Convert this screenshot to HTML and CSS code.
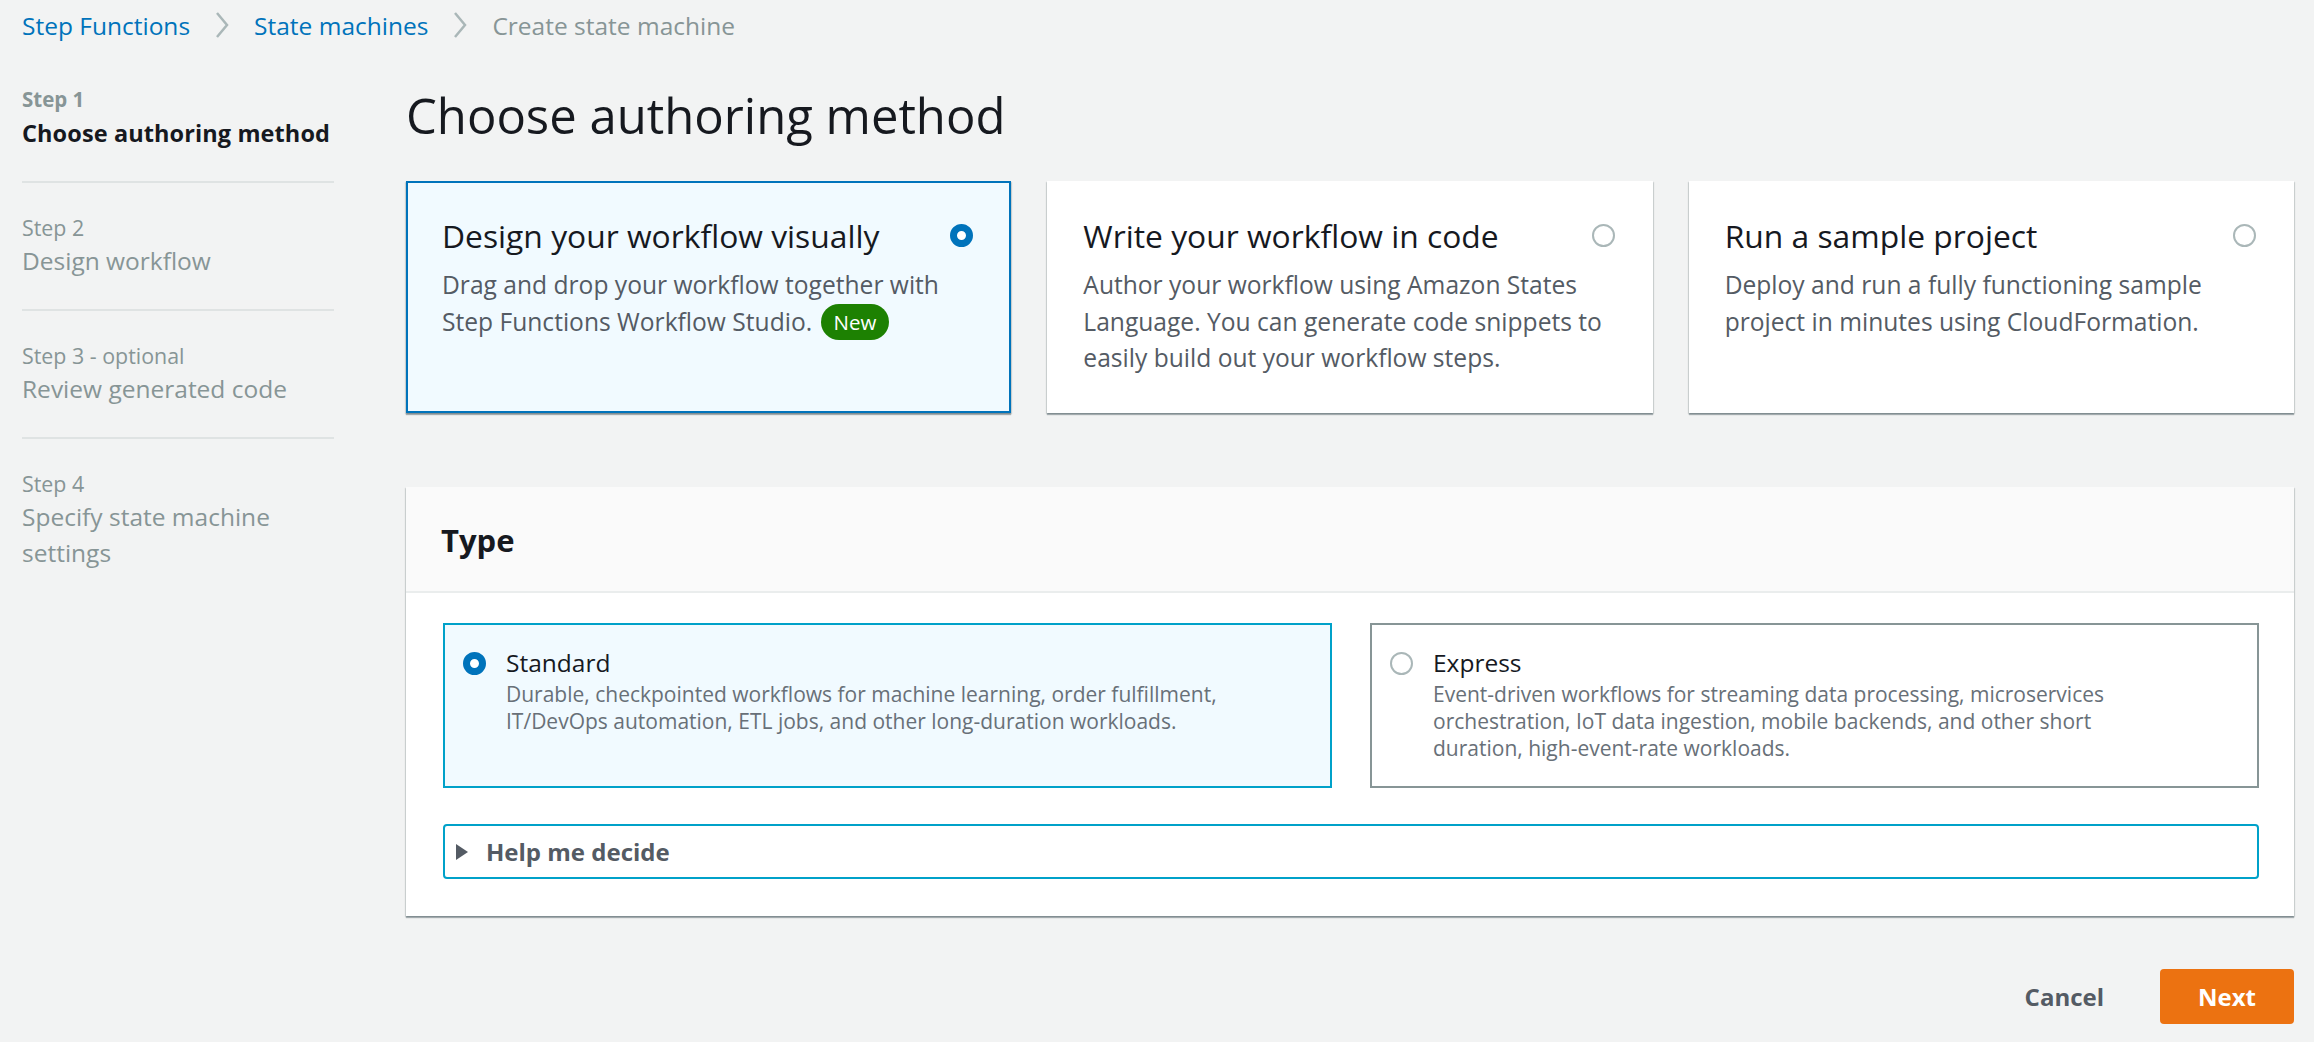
FILE: index.html
```html
<!DOCTYPE html>
<html lang="en">
<head>
<meta charset="utf-8">
<title>Create state machine</title>
<link rel="stylesheet" href="styles.css">
</head>
<body>
<div class="page">
  <nav class="breadcrumbs">
    <a class="crumb-link" href="#">Step Functions</a>
    <svg class="chevron" width="16" height="28" viewBox="0 0 16 28"><path d="M3 2 L13 14 L3 26" fill="none" stroke="#aab7b8" stroke-width="2.5"/></svg>
    <a class="crumb-link" href="#">State machines</a>
    <svg class="chevron" width="16" height="28" viewBox="0 0 16 28"><path d="M3 2 L13 14 L3 26" fill="none" stroke="#aab7b8" stroke-width="2.5"/></svg>
    <span class="crumb-current">Create state machine</span>
  </nav>

  <div class="layout">
    <aside class="steps">
      <ol class="step-list">
        <li class="step active">
          <div class="step-label">Step 1</div>
          <div class="step-title">Choose authoring method</div>
        </li>
        <li class="step">
          <div class="step-label">Step 2</div>
          <div class="step-title">Design workflow</div>
        </li>
        <li class="step">
          <div class="step-label">Step 3 - optional</div>
          <div class="step-title">Review generated code</div>
        </li>
        <li class="step">
          <div class="step-label">Step 4</div>
          <div class="step-title">Specify state machine settings</div>
        </li>
      </ol>
    </aside>

    <main class="main">
      <h1 class="page-title">Choose authoring method</h1>

      <div class="cards">
        <div class="card selected">
          <div class="card-head">
            <span class="card-title">Design your workflow visually</span>
            <span class="radio checked"></span>
          </div>
          <p class="card-desc">Drag and drop your workflow together with Step Functions Workflow Studio. <span class="badge">New</span></p>
        </div>
        <div class="card">
          <div class="card-head">
            <span class="card-title">Write your workflow in code</span>
            <span class="radio"></span>
          </div>
          <p class="card-desc">Author your workflow using Amazon States Language. You can generate code snippets to easily build out your workflow steps.</p>
        </div>
        <div class="card">
          <div class="card-head">
            <span class="card-title">Run a sample project</span>
            <span class="radio"></span>
          </div>
          <p class="card-desc">Deploy and run a fully functioning sample project in minutes using CloudFormation.</p>
        </div>
      </div>

      <section class="container">
        <div class="container-header">
          <h2 class="container-title">Type</h2>
        </div>
        <div class="container-body">
          <div class="tiles">
            <div class="tile selected">
              <span class="radio checked"></span>
              <div class="tile-text">
                <div class="tile-label">Standard</div>
                <div class="tile-desc">Durable, checkpointed workflows for machine learning, order fulfillment, IT/DevOps automation, ETL jobs, and other long-duration workloads.</div>
              </div>
            </div>
            <div class="tile">
              <span class="radio"></span>
              <div class="tile-text">
                <div class="tile-label">Express</div>
                <div class="tile-desc">Event-driven workflows for streaming data processing, microservices orchestration, IoT data ingestion, mobile backends, and other short duration, high-event-rate workloads.</div>
              </div>
            </div>
          </div>
          <div class="expander">
            <svg class="caret" width="14" height="18" viewBox="0 0 14 18"><path d="M1 1 L13 9 L1 17 Z" fill="#545b64"/></svg>
            <span class="expander-label">Help me decide</span>
          </div>
        </div>
      </section>

      <div class="actions">
        <button class="btn-link">Cancel</button>
        <button class="btn-primary">Next</button>
      </div>
    </main>
  </div>
</div>
</body>
</html>
```

FILE: styles.css
```css
* { box-sizing: border-box; }

html, body {
  margin: 0;
  padding: 0;
  background: #f2f3f3;
  font-family: "Open Sans", "Noto Sans", sans-serif;
  color: #16191f;
}

.page {
  padding: 0 20px 0 22px;
}

/* Breadcrumbs */
.breadcrumbs {
  height: 50px;
  display: flex;
  align-items: center;
  gap: 24px;
  font-size: 24.5px;
}
.crumb-link {
  color: #0073bb;
  text-decoration: none;
}
.crumb-current {
  color: #879596;
}
.chevron { display: block; }

/* Layout */
.layout {
  display: grid;
  grid-template-columns: 312px 1fr;
  column-gap: 72px;
}

/* Steps */
.steps { padding-top: 6px; }
.step-list {
  list-style: none;
  margin: 0;
  padding: 0;
}
.step {
  padding: 31px 0 30px;
  border-bottom: 2px solid #dfe3e3;
}
.step:first-child { padding-top: 30px; }
.step:last-child { border-bottom: none; }
.step-label {
  font-size: 21.4px;
  line-height: 27px;
  color: #879596;
}
.step-title {
  margin-top: 2px;
  font-size: 24.5px;
  line-height: 36px;
  color: #879596;
}
.step.active .step-label { font-weight: 700; font-size: 20.5px; }
.step.active .step-title {
  color: #16191f;
  font-weight: 700;
  font-size: 23.5px;
  letter-spacing: 0.1px;
  white-space: nowrap;
}

/* Main */
.page-title {
  margin: 35px 0 36px;
  font-size: 49px;
  line-height: 60px;
  font-weight: 400;
  color: #16191f;
}

.cards {
  display: grid;
  grid-template-columns: repeat(3, 1fr);
  column-gap: 36px;
}
.card {
  background: #fff;
  border: 2px solid transparent;
  padding: 34px 36px 34px 34px;
  box-shadow: 0 2px 1px 0 rgba(0, 28, 36, 0.3), 1px 1px 1px 0 rgba(0, 28, 36, 0.12), -1px 1px 1px 0 rgba(0, 28, 36, 0.12);
}
.card.selected {
  background: #f1faff;
  border-color: #0073bb;
}
.card-head {
  display: flex;
  align-items: center;
  justify-content: space-between;
  height: 37px;
}
.card-title {
  font-size: 31.8px;
  line-height: 37px;
  color: #16191f;
}
.card-desc {
  margin: 13px 0 0;
  font-size: 24.6px;
  line-height: 36.7px;
  color: #545b64;
}
.badge {
  display: inline-block;
  vertical-align: top;
  margin-left: 2px;
  padding: 0 13px;
  height: 36px;
  line-height: 36px;
  border-radius: 18px;
  background: #1d8102;
  color: #fff;
  font-size: 20.5px;
}

/* Radios */
.radio {
  flex: none;
  display: block;
  width: 23px;
  height: 23px;
  border-radius: 50%;
  border: 2px solid #aab7b8;
  background: #fff;
}
.radio.checked {
  border: 7px solid #0073bb;
  background: #fff;
}

/* Container */
.container {
  margin-top: 74px;
  background: #fff;
  box-shadow: 0 2px 1px 0 rgba(0, 28, 36, 0.3), 1px 1px 1px 0 rgba(0, 28, 36, 0.12), -1px 1px 1px 0 rgba(0, 28, 36, 0.12);
}
.container-header {
  background: #fafafa;
  border-bottom: 2px solid #eaeded;
  padding: 35px 35px 32px;
}
.container-title {
  margin: 0;
  font-size: 31px;
  line-height: 37px;
  font-weight: 700;
  color: #16191f;
}
.container-body {
  padding: 30px 35px 37px 37px;
}
.tiles {
  display: grid;
  grid-template-columns: 1fr 1fr;
  column-gap: 38px;
}
.tile {
  display: flex;
  align-items: flex-start;
  gap: 20px;
  border: 2px solid #879596;
  padding: 20px 30px 25px 18px;
}
.tile.selected {
  border-color: #00a1c9;
  background: #f1faff;
}
.tile .radio { margin-top: 7px; }
.tile-text { max-width: 730px; }
.tile-label {
  font-size: 24.5px;
  line-height: 36px;
  color: #16191f;
}
.tile-desc {
  font-size: 21px;
  line-height: 26.7px;
  color: #687078;
}

.expander {
  margin-top: 36px;
  height: 55px;
  border: 2px solid #00a1c9;
  border-radius: 4px;
  display: flex;
  align-items: center;
  padding-left: 10px;
  gap: 17px;
}
.caret { display: block; }
.expander-label {
  font-size: 24px;
  font-weight: 700;
  color: #545b64;
}

/* Actions */
.actions {
  margin-top: 53px;
  display: flex;
  justify-content: flex-end;
  align-items: center;
  gap: 23px;
}
.btn-link, .btn-primary {
  font-family: inherit;
  font-size: 24px;
  font-weight: 700;
  height: 55px;
  border-radius: 4px;
  cursor: pointer;
}
.btn-link {
  background: transparent;
  border: none;
  color: #545b64;
  padding: 0 33px;
}
.btn-primary {
  background: #ec7211;
  border: none;
  color: #fff;
  padding: 0 33px;
  min-width: 134px;
}
```
